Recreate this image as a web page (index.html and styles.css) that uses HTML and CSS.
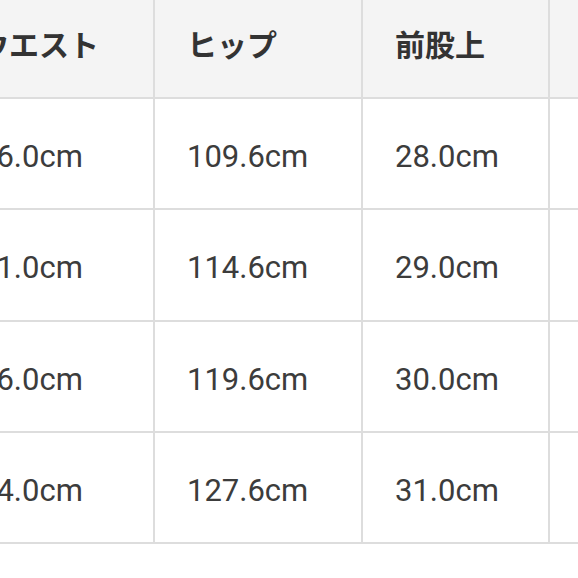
FILE: index.html
```html
<!DOCTYPE html>
<html lang="ja">
<head>
<meta charset="utf-8">
<link rel="stylesheet" href="styles.css">
</head>
<body>
<div class="viewport">
  <div class="sizes">
    <div class="cell head">ウエスト</div>
    <div class="cell head">ヒップ</div>
    <div class="cell head">前股上</div>
    <div class="cell head">股下</div>

    <div class="cell">76.0cm</div>
    <div class="cell">109.6cm</div>
    <div class="cell">28.0cm</div>
    <div class="cell">70.0cm</div>

    <div class="cell">81.0cm</div>
    <div class="cell">114.6cm</div>
    <div class="cell">29.0cm</div>
    <div class="cell">71.0cm</div>

    <div class="cell">86.0cm</div>
    <div class="cell">119.6cm</div>
    <div class="cell">30.0cm</div>
    <div class="cell">72.0cm</div>

    <div class="cell">94.0cm</div>
    <div class="cell">127.6cm</div>
    <div class="cell">31.0cm</div>
    <div class="cell">73.0cm</div>
  </div>
</div>
</body>
</html>
```
FILE: styles.css
```css
html, body {
  margin: 0;
  padding: 0;
  background: #ffffff;
}
.viewport {
  width: 578px;
  height: 578px;
  overflow: hidden;
}
.sizes {
  display: grid;
  grid-template-columns: 208px 208px 187px 208px;
  grid-template-rows: 99px repeat(4, 111.3px);
  margin-left: -53px;
  width: max-content;
  font-family: Roboto, "Noto Sans CJK JP", sans-serif;
  color: #3c3c3c;
}
.cell {
  box-sizing: border-box;
  display: flex;
  align-items: center;
  padding: 6px 32px 0;
  border-right: 2px solid #dddddd;
  border-bottom: 2px solid #dddddd;
  font-size: 31px;
  white-space: nowrap;
  overflow: hidden;
}
.head {
  background: #f4f4f4;
  font-family: "Noto Sans CJK JP", sans-serif;
  font-weight: 700;
  font-size: 30px;
  color: #333333;
  padding: 0 32px 12px;
}
```
